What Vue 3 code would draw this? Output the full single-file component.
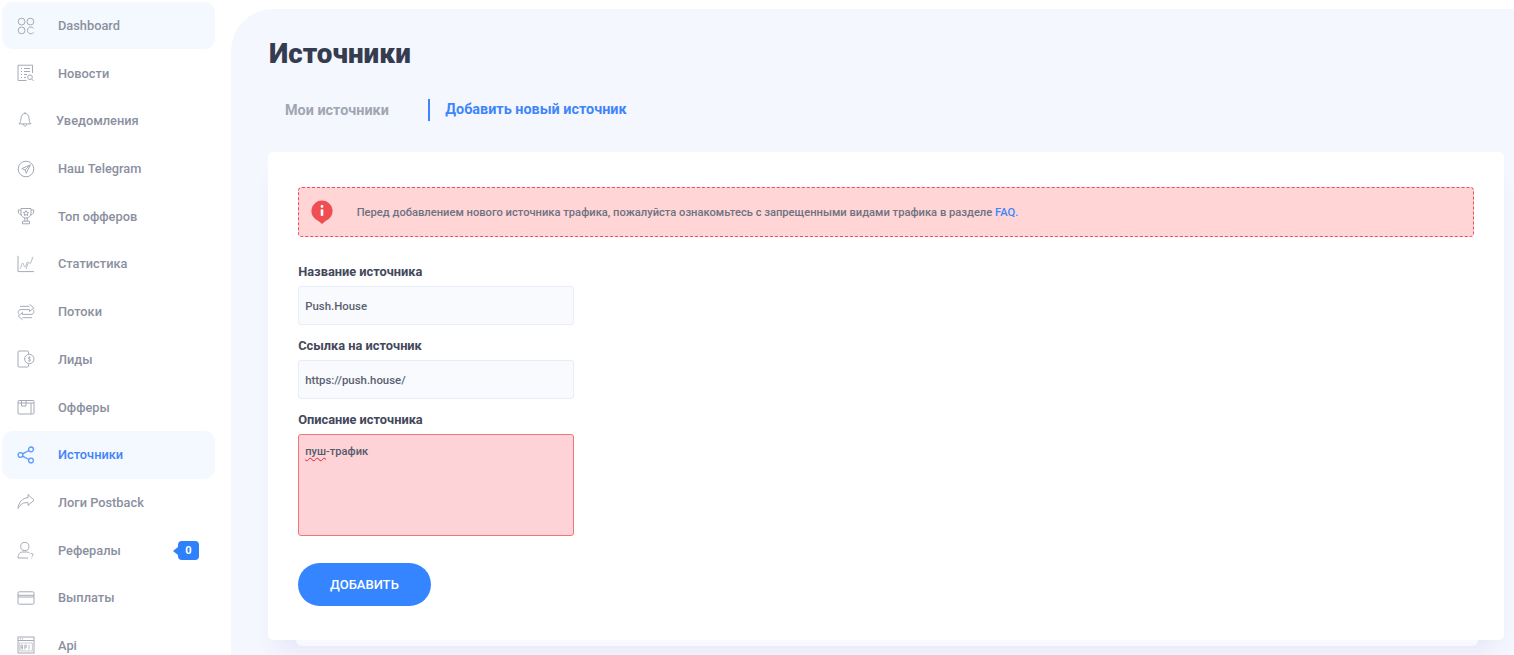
<script setup>
const items = [
  { label: 'Dashboard', icon: 'dash', active: 'soft' },
  { label: 'Новости', icon: 'news' },
  { label: 'Уведомления', icon: 'bell', shift: true },
  { label: 'Наш Telegram', icon: 'tg' },
  { label: 'Топ офферов', icon: 'cup' },
  { label: 'Статистика', icon: 'stat' },
  { label: 'Потоки', icon: 'flow' },
  { label: 'Лиды', icon: 'lead' },
  { label: 'Офферы', icon: 'box' },
  { label: 'Источники', icon: 'share', active: 'on' },
  { label: 'Логи Postback', icon: 'back' },
  { label: 'Рефералы', icon: 'ref', badge: 0 },
  { label: 'Выплаты', icon: 'card' },
  { label: 'Api', icon: 'api' }
]
</script>

<template>
  <div class="page">
    <aside class="side">
      <a
        v-for="it in items"
        :key="it.label"
        class="item"
        :class="{ soft: it.active === 'soft', on: it.active === 'on' }"
      >
        <svg class="ico" viewBox="0 0 18 18" fill="none" stroke="currentColor" stroke-width="1">
          <template v-if="it.icon === 'dash'">
            <circle cx="4.6" cy="4.6" r="3.4" /><circle cx="13.4" cy="4.6" r="3.4" />
            <circle cx="4.6" cy="13.4" r="3.4" /><path d="M16.6 11.4a3.4 3.4 0 1 0 0 4" />
          </template>
          <template v-else-if="it.icon === 'news'">
            <path d="M15.5 9V1.2H1v15.3h8.5" />
            <path d="M4 4.5h1M7 4.5h6M4 7.5h1M7 7.5h6M4 10.5h1M7 10.5h3M4 13.5h1M7 13.5h2" />
            <circle cx="13" cy="13.2" r="2.3" /><path d="M14.7 15l2 2" />
          </template>
          <template v-else-if="it.icon === 'bell'">
            <g transform="translate(-1 -1.5)">
              <path d="M9 .8v2.200" />
              <path d="M3 13.400c1.300-1.200 1.900-2.800 1.900-5.100 0-3 1.700-5.300 4.100-5.300s4.100 2.300 4.100 5.300c0 2.300.6 3.900 1.900 5.100z" />
              <path d="M7.300 13.600c.1 2.700 3.300 2.700 3.400 0" />
            </g>
          </template>
          <template v-else-if="it.icon === 'tg'">
            <circle cx="9" cy="9" r="7.800" />
            <path d="M13.300 4.900L4.800 8.600l3.300 1.300 1.200 3.400zM8.100 9.900l5.200-5" />
          </template>
          <template v-else-if="it.icon === 'cup'">
            <path d="M4 1.500h10v4.800c0 2.800-2.200 4.700-5 4.700s-5-1.900-5-4.700z" />
            <path d="M4 3H1.200c0 3 1 4.600 3.200 5M14 3h2.800c0 3-1 4.600-3.200 5M7.800 11v3M10.200 11v3M5.500 14.200h7v2.600h-7z" />
            <path d="M9 3.600l.9 1.700 1.800.2-1.300 1.200.3 1.800-1.700-.9-1.700.9.3-1.800-1.300-1.200 1.800-.2z" />
          </template>
          <template v-else-if="it.icon === 'stat'">
            <path d="M1 .8v15.800h16" />
            <path d="M3 13.800c1.200-1.200 1-4.300 2.400-5.500 1.500-1.200 1.100 4.200 2.700 3.600 1.500-.8 1.300-5.200 2.700-4.800" stroke-width=".8" />
            <path d="M9 14l2.200-6.200c.7-2 1.400 1.800 2.400.4L16 1.800" stroke-width=".8" />
          </template>
          <template v-else-if="it.icon === 'flow'">
            <path d="M12.500 1.200l4.300 3.700-4.300 3.600V6.600H4C2 6.600 1.200 7.800 1.200 9.400c0 .9.3 1.500.8 2" />
            <path d="M5.500 16.800l-4.300-3.700 4.300-3.600v1.900H14c2 0 2.800-1.200 2.800-2.800 0-.9-.3-1.500-.8-2" />
            <path d="M3 3.300h9.500M5.500 14.700H15" />
          </template>
          <template v-else-if="it.icon === 'lead'">
            <path d="M11.500 3.800V2c0-.6-.4-1-1-1H2c-.6 0-1 .4-1 1v14c0 .6.4 1 1 1h8.500c.6 0 1-.4 1-1v-1.800" />
            <circle cx="12.300" cy="9" r="4.700" />
            <path d="M13.500 7.500c-.7-.8-2.300-.6-2.300.5 0 1.300 2.400.7 2.400 2.100 0 1.100-1.700 1.200-2.500.4M12.300 6.200v5.600" stroke-width=".8" />
          </template>
          <template v-else-if="it.icon === 'box'">
            <rect x="1" y="2.500" width="16" height="13.500" rx="1" />
            <path d="M1 5h16M4.500 2.500v5.500h4.500V2.500M14 5v11" />
          </template>
          <template v-else-if="it.icon === 'share'">
            <g stroke-width="1.300">
              <circle cx="3.500" cy="9" r="2.400" /><circle cx="14" cy="3.400" r="2.400" /><circle cx="14" cy="14.600" r="2.400" />
              <path d="M5.600 7.900l6.300-3.400M5.600 10.100l6.300 3.400" />
            </g>
          </template>
          <template v-else-if="it.icon === 'back'">
            <path d="M11 1.500l6 5.800-6 5.200V9.600C6.500 9.400 3.500 11 1 15.500 1.500 9.500 5.500 5 11 4.700z" />
          </template>
          <template v-else-if="it.icon === 'ref'">
            <circle cx="7.800" cy="5.500" r="4.100" />
            <path d="M1 17c0-3.800 1.800-6 5-6h3.500c1.200 0 2.300.3 3 .8M1 17h10" />
            <path d="M13.200 13.300c.4-1.200 3-1 3 .5 0 1.100-1.500 1.100-1.500 2.200M14.700 17v.6" />
          </template>
          <template v-else-if="it.icon === 'card'">
            <rect x="1" y="2.800" width="16" height="12.400" rx="1.200" />
            <path d="M1 6.300h16M1 8h16" />
          </template>
          <template v-else>
            <rect x="1" y="1" width="16" height="16" />
            <path d="M1 4.500h16M3 2.800h1M5 2.800h1" />
            <rect x="2.800" y="7" width="12.400" height="8" stroke-width="0.6" />
            <path d="M4 13.500v-4.500h1.500v4.500M4 11.500h1.500M7.800 13.500V9h1.500v2.300H7.800M12 9v4.500" stroke-width="0.8" />
          </template>
        </svg>
        <span class="label" :class="{ shifted: it.shift }">{{ it.label }}</span>
        <span v-if="it.badge !== undefined" class="badge">{{ it.badge }}</span>
      </a>
    </aside>

    <main class="main">
      <h1 class="title">Источники</h1>
      <nav class="tabs">
        <a class="tab">Мои источники</a>
        <a class="tab current">Добавить новый источник</a>
      </nav>

      <section class="card">
        <div class="alert">
          <svg class="alert-ico" viewBox="0 0 22 24">
            <path fill="#ef4f54" d="M11 .5a10.500 10.500 0 0 1 3.600 20.400L11 24l-3.600-3.100A10.500 10.500 0 0 1 11 .5z" />
            <rect x="9.700" y="5" width="2.600" height="2.700" rx="1" fill="#fff" />
            <rect x="9.700" y="9.300" width="2.600" height="6.800" rx="1" fill="#fff" />
          </svg>
          <p class="alert-text">
            Перед добавлением нового источника трафика, пожалуйста ознакомьтесь с запрещенными видами трафика в разделе
            <a class="faq">FAQ.</a>
          </p>
        </div>

        <form class="form" @submit.prevent>
          <label class="field">
            <span class="field-label">Название источника</span>
            <input class="input" value="Push.House" />
          </label>
          <label class="field">
            <span class="field-label">Ссылка на источник</span>
            <input class="input" value="https://push.house/" />
          </label>
          <div class="field">
            <span class="field-label">Описание источника</span>
            <div class="area"><span class="typo">пуш</span>-трафик</div>
          </div>
          <button class="submit" type="submit">ДОБАВИТЬ</button>
        </form>
      </section>
      <div class="under"></div>
    </main>
  </div>
</template>

<style>
html, body { margin: 0; height: 100%; overflow: hidden; background: #fff; }
</style>

<style scoped>
.page {
  display: flex;
  width: 1514px;
  height: 655px;
  overflow: hidden;
  background: #fff;
  font-family: Roboto, "Noto Sans", sans-serif;
}
.side {
  flex: 0 0 231px;
  box-sizing: border-box;
  padding: 1.7px 16px 0 2px;
  display: flex;
  flex-direction: column;
}
.item {
  position: relative;
  flex: 0 0 47.7px;
  display: flex;
  align-items: center;
  box-sizing: border-box;
  padding-left: 15px;
  border-radius: 11px;
  color: #a6aab6;
  font-size: 12.8px;
  font-weight: 500;
}
.item.soft, .item.on { background: #f4f8ff; }
.item.on { color: #5b9bfb; }
.ico { flex: 0 0 18px; width: 18px; height: 18px; }
.label { margin-left: 23px; color: #8b90a0; white-space: nowrap; }
.label.shifted { margin-left: 21px; }
.item.on .label { color: #3f83f8; }
.badge {
  position: absolute;
  left: 176px;
  top: 14.500px;
  width: 21px;
  height: 19px;
  display: flex;
  align-items: center;
  justify-content: center;
  border-radius: 4px;
  background: #2f81fb;
  color: #fff;
  font-size: 11px;
  font-weight: 700;
}
.badge::before {
  content: "";
  position: absolute;
  left: -5px;
  top: 6px;
  border-style: solid;
  border-width: 4px 5px 4px 0;
  border-color: transparent #2f81fb transparent transparent;
}
.main {
  flex: 1;
  min-width: 0;
  margin-top: 9px;
  box-sizing: border-box;
  padding: 0 10px 0 37.200px;
  border-top-left-radius: 42px;
  background: #f4f7fe;
}
.title {
  margin: 0 0 0 .8px;
  padding-top: 28px;
  font-size: 27.800px;
  line-height: 34px;
  font-weight: 900;
  color: #363c50;
}
.tabs {
  display: flex;
  align-items: center;
  margin-top: 28px;
  height: 22px;
}
.tab {
  font-size: 14.400px;
  font-weight: 700;
  color: #a1a5b1;
  padding-left: 16.800px;
  width: 143.300px;
  white-space: nowrap;
}
.tab.current {
  width: auto;
  padding-left: 15px;
  color: #3e85fb;
  border-left: 2px solid #3e85fb;
  line-height: 22px;
}
.card {
  margin-top: 31px;
  box-sizing: border-box;
  height: 488px;
  padding: 35px 30px 0;
  border-radius: 5px;
  background: #fff;
  box-shadow: 0 18px 24px -10px rgba(60, 60, 150, 0.09);
}
.alert {
  display: flex;
  align-items: center;
  box-sizing: border-box;
  height: 50px;
  padding-left: 12px;
  border: 1px dashed #ec4f57;
  border-radius: 4px;
  background: #ffd5d6;
}
.alert-ico { flex: 0 0 22px; width: 22px; height: 24px; margin-top: -1px; }
.alert-text {
  margin: 0 0 0 23.500px;
  font-size: 11.170px;
  font-weight: 500;
  color: #6d7181;
  white-space: nowrap;
}
.faq { color: #3e85fb; font-weight: 500; }
.form { display: flex; flex-direction: column; align-items: flex-start; margin-top: 27px; }
.field { display: flex; flex-direction: column; width: 276px; margin-bottom: 13px; }
.field-label {
  font-size: 12.800px;
  line-height: 16px;
  font-weight: 700;
  color: #43485a;
  margin-bottom: 6px;
}
.input {
  box-sizing: border-box;
  width: 276px;
  height: 39px;
  padding: 0 6px;
  border: 1px solid #e7ecf8;
  border-radius: 3px;
  outline: none;
  background: #f9fafe;
  font-family: inherit;
  font-size: 11.400px;
  font-weight: 500;
  color: #5b5f70;
}
.area {
  box-sizing: border-box;
  width: 276px;
  height: 102px;
  padding: 10px 6px;
  border: 1px solid #f2747c;
  border-radius: 3px;
  background: #fdd3d7;
  font-size: 11.100px;
  line-height: 14px;
  font-weight: 500;
  color: #555a6c;
}
.typo { text-decoration: underline wavy #e5242b 1px; text-underline-offset: 2px; }
.submit {
  width: 132.500px;
  height: 43px;
  margin-top: 14px;
  border: 0;
  border-radius: 22px;
  background: #3485ff;
  color: #fff;
  font-family: inherit;
  font-size: 13px;
  font-weight: 500;
  padding: 0;
}
.under {
  height: 6px;
  margin: 0 26px 0 28px;
  border-radius: 0 0 8px 8px;
  background: #f8f9fe;
}
</style>
